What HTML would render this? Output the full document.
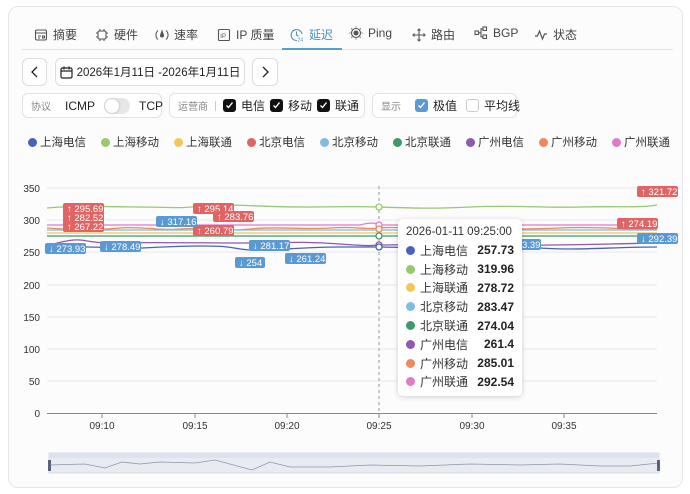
<!DOCTYPE html>
<html><head><meta charset="utf-8">
<style>
*{box-sizing:border-box;margin:0;padding:0}
body{width:690px;height:494px;background:#fff;font-family:"Liberation Sans","Noto Sans CJK SC",sans-serif;color:#333;position:relative;overflow:hidden}
.card{position:absolute;left:8px;top:6px;width:675px;height:482px;border:1px solid #e6e6e6;border-radius:10px;background:#fcfcfd}
.tabs{position:absolute;left:22px;top:22px;width:651px;height:28px;border-bottom:1px solid #e4e4e4;font-size:12px;color:#444}
.tab{position:absolute;top:4px;display:flex;align-items:center;gap:5px;white-space:nowrap}
.tab svg{width:14px;height:14px}
.act{color:#4a8fc0}
.ul{position:absolute;left:260px;top:26px;width:60px;height:2px;background:#5b9ccc}
.btn{position:absolute;border:1px solid #ddd;border-radius:6px;background:#fff;display:flex;align-items:center;justify-content:center;font-size:12px;color:#222;white-space:nowrap}
.grp{position:absolute;top:93px;height:25px;border:1px solid #e2e2e2;border-radius:6px;background:#fff;display:flex;align-items:center;font-size:12px;color:#222;padding-left:8px;gap:5px;white-space:nowrap}
.lbl{color:#888;font-size:10px}
.sep{width:1px;height:10px;background:#ccc;margin:0 2px}
.cb{width:13px;height:13px;border-radius:3px;background:#111;display:inline-flex;align-items:center;justify-content:center;flex:none}
.cb svg{width:9px;height:9px}
.leg{position:absolute;top:134px;left:28px;font-size:11.5px;color:#333;height:16px;width:660px}
.leg span{position:absolute;top:0;display:flex;align-items:center;white-space:nowrap}
.leg i{width:9px;height:9px;border-radius:50%;display:inline-block;margin-right:3px}
.tt{position:absolute;left:398px;top:219px;width:124px;height:177px;background:#fff;border-radius:5px;box-shadow:0 1px 6px rgba(0,0,0,.18);font-size:12px;color:#333;padding:7px 8px}
.tt .h{margin-bottom:3px;font-size:11.5px}
.tt .r{display:flex;align-items:center;height:18.8px}
.tt .r i{width:9px;height:9px;border-radius:50%;margin-right:5px}
.tt .r b{margin-left:auto;font-weight:600;color:#222}
</style></head><body>
<div class="card"></div>
<div class="tabs">
 <div class="tab" style="left:12px"><svg viewBox="0 0 14 14" fill="none" stroke="#555" stroke-width="1.1"><rect x="1.5" y="2" width="11" height="10" rx="1.5"/><path d="M1.5 5h11M4 8h3M4 10h2M8.5 8h2v2h-2z"/></svg>摘要</div>
 <div class="tab" style="left:73px"><svg viewBox="0 0 14 14" fill="none" stroke="#555" stroke-width="1.1"><rect x="3" y="3" width="8" height="8" rx="1.5"/><path d="M5 1v2M9 1v2M5 11v2M9 11v2M1 5h2M1 9h2M11 5h2M11 9h2"/></svg>硬件</div>
 <div class="tab" style="left:133px"><svg viewBox="0 0 14 14" fill="none" stroke="#555" stroke-width="1.1"><path d="M3 2.5a6 6 0 0 0 0 9M11 2.5a6 6 0 0 1 0 9"/><path d="M7 3l1.5 4.5a1.5 1.5 0 0 1-3 0z" fill="#555"/></svg>速率</div>
 <div class="tab" style="left:195px"><svg viewBox="0 0 14 14" fill="none" stroke="#555" stroke-width="1.1"><rect x="1.5" y="1.5" width="11" height="11" rx="1"/><text x="3.3" y="9.8" font-size="6" fill="#555" stroke="none" font-family="Liberation Sans">IP</text></svg>IP 质量</div>
 <div class="tab act" style="left:268px"><svg viewBox="0 0 14 14" fill="none" stroke="#4a8fc0" stroke-width="1.1"><path d="M12 6a5.5 5.5 0 1 0-5 6.5"/><path d="M6.5 3.5V7l2 1"/><text x="7.5" y="13.5" font-size="5" fill="#4a8fc0" stroke="none">24</text></svg>延迟</div>
 <div class="tab" style="left:327px"><svg viewBox="0 0 14 14" fill="none" stroke="#555" stroke-width="1.1"><circle cx="7" cy="7" r="4.5"/><circle cx="7" cy="7" r="2" fill="#555"/><path d="M7 0.5v1M7 12.5v1M0.5 7h1M12.5 7h1M2.4 2.4l.7.7M10.9 10.9l.7.7M2.4 11.6l.7-.7M10.9 3.1l.7-.7"/></svg>Ping</div>
 <div class="tab" style="left:390px"><svg viewBox="0 0 14 14" fill="none" stroke="#555" stroke-width="1.1"><path d="M7 1v12M1 7h12M5.5 2.5L7 1l1.5 1.5M5.5 11.5L7 13l1.5-1.5M2.5 5.5L1 7l1.5 1.5M11.5 5.5L13 7l-1.5 1.5"/></svg>路由</div>
 <div class="tab" style="left:452px"><svg viewBox="0 0 14 14" fill="none" stroke="#555" stroke-width="1.1"><rect x="1" y="5" width="3.5" height="3.5"/><rect x="9" y="1" width="3.5" height="3.5"/><rect x="9" y="9" width="3.5" height="3.5"/><path d="M4.5 6.8h2.5V2.8h2M7 6.8v4h2"/></svg>BGP</div>
 <div class="tab" style="left:512px"><svg viewBox="0 0 14 14" fill="none" stroke="#555" stroke-width="1.2"><path d="M1 8h2.5l2-5 3 8 2-5H13"/></svg>状态</div>
 <div class="ul"></div>
</div>

<div class="btn" style="left:22px;top:58px;width:25px;height:28px"><svg width="10" height="12" viewBox="0 0 10 12"><path d="M7 1L2 6l5 5" fill="none" stroke="#222" stroke-width="1.3"/></svg></div>
<div class="btn" style="left:55px;top:58px;width:190px;height:28px;gap:4px;font-size:11.5px"><svg width="13" height="13" viewBox="0 0 13 13" fill="none" stroke="#222" stroke-width="1.2"><rect x="1" y="2" width="11" height="10" rx="1.5"/><path d="M1 5h11M4 0.5v3M9 0.5v3"/></svg>2026年1月11日 -2026年1月11日</div>
<div class="btn" style="left:252px;top:58px;width:26px;height:28px"><svg width="10" height="12" viewBox="0 0 10 12"><path d="M3 1l5 5-5 5" fill="none" stroke="#222" stroke-width="1.3"/></svg></div>

<div class="grp" style="left:22px;width:140px"><span class="lbl">协议</span><span class="sep"></span>ICMP<span style="width:26px;height:16px;border-radius:8px;background:#e6e6e6;position:relative;margin:0 4px;flex:none"><span style="position:absolute;left:1px;top:1px;width:14px;height:14px;border-radius:50%;background:#fff;box-shadow:0 0 2px rgba(0,0,0,.3)"></span></span>TCP</div>
<div class="grp" style="left:169px;width:196px"><span class="lbl">运营商</span><span class="sep"></span><span class="cb"><svg viewBox="0 0 9 9"><path d="M1.5 4.5l2 2 4-5" fill="none" stroke="#fff" stroke-width="1.4"/></svg></span>电信 <span class="cb"><svg viewBox="0 0 9 9"><path d="M1.5 4.5l2 2 4-5" fill="none" stroke="#fff" stroke-width="1.4"/></svg></span>移动 <span class="cb"><svg viewBox="0 0 9 9"><path d="M1.5 4.5l2 2 4-5" fill="none" stroke="#fff" stroke-width="1.4"/></svg></span>联通</div>
<div class="grp" style="left:372px;width:145px"><span class="lbl">显示</span><span class="sep"></span><span class="cb" style="background:#5a9ad4"><svg viewBox="0 0 9 9"><path d="M1.5 4.5l2 2 4-5" fill="none" stroke="#fff" stroke-width="1.4"/></svg></span>极值 <span class="cb" style="background:#fff;border:1px solid #ccc;margin-left:4px"></span>平均线</div>

<div class="leg">
<span style="left:0"><i style="background:#4a62b8"></i>上海电信</span><span style="left:73px"><i style="background:#97c96f"></i>上海移动</span><span style="left:146px"><i style="background:#f0c85a"></i>上海联通</span><span style="left:219px"><i style="background:#e06464"></i>北京电信</span><span style="left:292px"><i style="background:#7fbde0"></i>北京移动</span><span style="left:365px"><i style="background:#3e9a6a"></i>北京联通</span><span style="left:438px"><i style="background:#8e59b0"></i>广州电信</span><span style="left:511px"><i style="background:#f0885a"></i>广州移动</span><span style="left:584px"><i style="background:#e07ac8"></i>广州联通</span>
</div>

<svg style="position:absolute;left:0;top:0" width="690" height="494" font-family="Liberation Sans" font-size="10">
 <g stroke="#e8e8e8" stroke-width="1">
  <line x1="47" y1="188" x2="657" y2="188"/><line x1="47" y1="220" x2="657" y2="220"/><line x1="47" y1="252" x2="657" y2="252"/><line x1="47" y1="285" x2="657" y2="285"/><line x1="47" y1="317" x2="657" y2="317"/><line x1="47" y1="349" x2="657" y2="349"/><line x1="47" y1="381" x2="657" y2="381"/>
 </g>
 <line x1="47" y1="413.5" x2="657" y2="413.5" stroke="#888"/>
 <g fill="#333" text-anchor="end"><text x="40" y="192">350</text><text x="40" y="224">300</text><text x="40" y="256">250</text><text x="40" y="289">200</text><text x="40" y="321">150</text><text x="40" y="353">100</text><text x="40" y="385">50</text><text x="40" y="417">0</text></g>
 <g stroke="#888"><line x1="102" y1="413" x2="102" y2="418"/><line x1="195" y1="413" x2="195" y2="418"/><line x1="287" y1="413" x2="287" y2="418"/><line x1="379" y1="413" x2="379" y2="418"/><line x1="472" y1="413" x2="472" y2="418"/><line x1="564" y1="413" x2="564" y2="418"/></g>
 <g fill="#333" text-anchor="middle"><text x="102" y="429">09:10</text><text x="195" y="429">09:15</text><text x="287" y="429">09:20</text><text x="379" y="429">09:25</text><text x="472" y="429">09:30</text><text x="564" y="429">09:35</text></g>
 <line x1="379" y1="186" x2="379" y2="413" stroke="#999" stroke-dasharray="3,3"/>
 <g fill="none" stroke-width="1.3">
  <path d="M47 208 C80 205,110 207,140 207 S180 209,200 206 S260 207,300 207 S350 206,379 207 S430 209,470 207 S540 208,580 207 S640 208,657 205" stroke="#97c96f"/>
  <path d="M47 225 H360 C370 222,378 223,379 225 H657" stroke="#e07ac8"/>
  <path d="M47 228 C70 230,100 230,120 228 S160 231,180 229 S220 232,250 229 S300 230,330 228 S360 230,379 228 S420 230,460 229 S520 230,560 228 S620 230,657 229" stroke="#f0885a"/>
  <path d="M47 230 H657" stroke="#7fbde0"/>
  <path d="M47 233 H657" stroke="#f0c85a"/>
  <path d="M47 236 H657" stroke="#3e9a6a"/>
  <path d="M47 245 C60 243,70 239,80 240 S100 244,120 243 S200 243,240 243 S300 241,340 244 S370 245,379 245 S450 244,500 245 S600 244,657 243" stroke="#8e59b0"/>
  <path d="M47 249 C70 247,90 246,110 248 S160 246,200 246 S230 249,250 250 S300 247,340 247 S370 247,379 247 S450 249,500 248 S540 249,570 249 S620 247,657 247" stroke="#4a62b8"/>
 </g>
 <g fill="#fff" stroke-width="1.3"><circle cx="379" cy="207" r="3" stroke="#97c96f"/><circle cx="379" cy="225" r="3" stroke="#e07ac8"/><circle cx="379" cy="229" r="3" stroke="#f0885a"/><circle cx="379" cy="236" r="3" stroke="#3e9a6a"/><circle cx="379" cy="245" r="3" stroke="#8e59b0"/><circle cx="379" cy="247" r="3" stroke="#4a62b8"/></g>
 <g font-size="9.5" fill="#fff">
  <rect x="63" y="203" width="41" height="11" rx="2" fill="#e06464"/><text x="67" y="212">↑ 295.69</text>
  <rect x="63" y="212" width="41" height="11" rx="2" fill="#e06464"/><text x="67" y="221">↑ 282.52</text>
  <rect x="63" y="221" width="41" height="11" rx="2" fill="#e06464"/><text x="67" y="230">↑ 267.22</text>
  <rect x="193" y="203" width="41" height="11" rx="2" fill="#e06464"/><text x="197" y="212">↑ 295.14</text>
  <rect x="213" y="211" width="41" height="11" rx="2" fill="#e06464"/><text x="217" y="220">↑ 283.76</text>
  <rect x="193" y="225" width="41" height="11" rx="2" fill="#e06464"/><text x="197" y="234">↑ 260.79</text>
  <rect x="156" y="216" width="41" height="11" rx="2" fill="#5a9ad4"/><text x="160" y="225">↓ 317.16</text>
  <rect x="45" y="243" width="41" height="11" rx="2" fill="#5a9ad4"/><text x="49" y="252">↓ 273.93</text>
  <rect x="100" y="241" width="41" height="11" rx="2" fill="#5a9ad4"/><text x="104" y="250">↓ 278.49</text>
  <rect x="249" y="240" width="41" height="11" rx="2" fill="#5a9ad4"/><text x="253" y="249">↓ 281.17</text>
  <rect x="235" y="257" width="30" height="11" rx="2" fill="#5a9ad4"/><text x="239" y="266">↓ 254</text>
  <rect x="285" y="253" width="41" height="11" rx="2" fill="#5a9ad4"/><text x="289" y="262">↓ 261.24</text>
  <rect x="500" y="239" width="41" height="11" rx="2" fill="#5a9ad4"/><text x="504" y="248">↓ 283.39</text>
  <rect x="617" y="218" width="41" height="11" rx="2" fill="#e06464"/><text x="621" y="227">↑ 274.19</text>
 </g>
 <rect x="49" y="453" width="610" height="20" fill="#e8ebf2" stroke="#d6dbe6"/>
 <rect x="49" y="453" width="610" height="5" fill="#dde2ec"/>
 <path d="M49 465 L85 464 L105 468 L122 462 L140 464 L160 462 L195 463 L215 460 L252 470 L270 462 L290 467 L330 467 L370 465 L420 466 L470 464 L520 465 L560 464 L600 466 L630 466 L659 463" fill="none" stroke="#8e96a8" stroke-width="0.8"/>
 <rect x="48" y="460" width="3" height="11" fill="#5a6478"/><rect x="657" y="460" width="3" height="11" fill="#5a6478"/>
</svg>
<div style="position:absolute;left:659px;top:180px;width:23px;height:250px;background:#fcfcfd"></div>
<svg style="position:absolute;left:637px;top:186px" width="45" height="60" font-family="Liberation Sans" font-size="9.5" fill="#fff"><rect x="0" y="0" width="41" height="11" rx="2" fill="#e06464"/><text x="4" y="9">↑ 321.72</text><rect x="0" y="47" width="41" height="11" rx="2" fill="#5a9ad4"/><text x="4" y="56">↓ 292.39</text></svg>
<div class="tt">
 <div class="h">2026-01-11 09:25:00</div>
 <div class="r"><i style="background:#4a62b8"></i>上海电信<b>257.73</b></div>
 <div class="r"><i style="background:#97c96f"></i>上海移动<b>319.96</b></div>
 <div class="r"><i style="background:#f0c85a"></i>上海联通<b>278.72</b></div>
 <div class="r"><i style="background:#7fbde0"></i>北京移动<b>283.47</b></div>
 <div class="r"><i style="background:#3e9a6a"></i>北京联通<b>274.04</b></div>
 <div class="r"><i style="background:#8e59b0"></i>广州电信<b>261.4</b></div>
 <div class="r"><i style="background:#f0885a"></i>广州移动<b>285.01</b></div>
 <div class="r"><i style="background:#e07ac8"></i>广州联通<b>292.54</b></div>
</div>
</body></html>
